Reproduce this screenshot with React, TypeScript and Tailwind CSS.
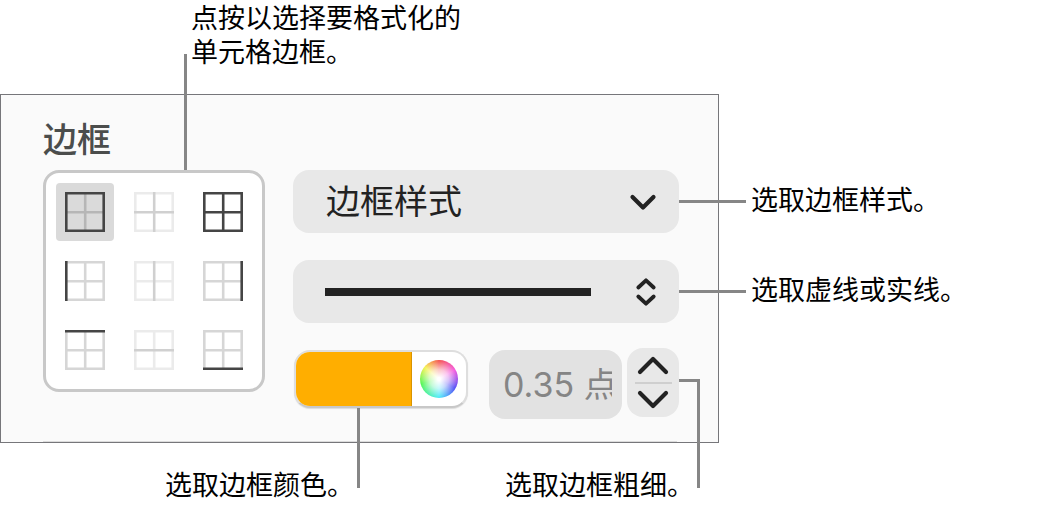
import { useState, type ReactNode } from "react";

type GridColors = {
  id: string;
  label: string;
  top: string;
  right: string;
  bottom: string;
  left: string;
  vertical: string;
  horizontal: string;
};

const DARK = "#454545";
const MID = "#d6d6d6";
const FAINT = "#ebebeb";
const INNER = "#d0d0d0";

const base = { top: MID, right: MID, bottom: MID, left: MID, vertical: MID, horizontal: MID };
const faint = { top: FAINT, right: FAINT, bottom: FAINT, left: FAINT, vertical: FAINT, horizontal: FAINT };

const BORDERS: GridColors[] = [
  { id: "outer", label: "外边框", top: DARK, right: DARK, bottom: DARK, left: DARK, vertical: "#b6b6b6", horizontal: "#b6b6b6" },
  { ...faint, id: "inner", label: "内边框", vertical: INNER, horizontal: INNER },
  { id: "all", label: "所有边框", top: DARK, right: DARK, bottom: DARK, left: DARK, vertical: DARK, horizontal: DARK },
  { ...base, id: "left", label: "左边框", left: DARK },
  { ...faint, id: "vertical", label: "垂直内边框", vertical: INNER },
  { ...base, id: "right", label: "右边框", right: DARK },
  { ...base, id: "top", label: "上边框", top: DARK },
  { ...faint, id: "horizontal", label: "水平内边框", horizontal: INNER },
  { ...base, id: "bottom", label: "下边框", bottom: DARK },
];

function BorderIcon({ c }: { c: GridColors }) {
  const edges = [
    { d: "M20.2 0V40", s: c.vertical },
    { d: "M0 20.2H40", s: c.horizontal },
    { d: "M0 1.3H40", s: c.top },
    { d: "M38.7 0V40", s: c.right },
    { d: "M0 38.7H40", s: c.bottom },
    { d: "M1.3 0V40", s: c.left },
  ];
  const rank = (s: string) => (s === DARK ? 2 : s === INNER ? 1 : 0);
  const ordered = [...edges].sort((a, b) => rank(a.s) - rank(b.s));
  return (
    <svg viewBox="0 0 40 40" className="size-10" fill="none" strokeWidth="2.6" aria-hidden="true">
      {ordered.map((e) => (
        <path key={e.d} d={e.d} stroke={e.s} />
      ))}
    </svg>
  );
}

function Chevron({ d, className }: { d: string; className: string }) {
  return (
    <svg
      viewBox="0 0 32 20"
      className={className}
      fill="none"
      stroke="#222"
      strokeWidth="4.2"
      strokeLinecap="round"
      strokeLinejoin="round"
      aria-hidden="true"
    >
      <path d={d} />
    </svg>
  );
}

function Note({ children }: { children: ReactNode }) {
  return <p className="text-[27px] leading-[34px] whitespace-nowrap text-black">{children}</p>;
}

export default function App() {
  const [selected, setSelected] = useState("outer");
  const [weight, setWeight] = useState("0.35 点");

  const step = (delta: number) =>
    setWeight((w) => `${Math.max(0, (parseFloat(w) || 0) + delta).toFixed(2)} 点`);

  return (
    <main className="bg-white font-['Noto_Sans_CJK_SC',sans-serif]">
      <div className="h-[94px] pl-[191px]">
        <Note>
          点按以选择要格式化的
          <br />
          单元格边框。
        </Note>
      </div>

      <div className="flex">
        <section className="w-full max-w-[719px] border border-[#76767a] bg-[#fafafa] pt-[19px] pl-[42px]">
          <h2 className="text-[34px] leading-[48px] font-medium text-[#4b4d4c]">边框</h2>
          <div className="flex gap-7 pt-2 pr-[39px]">
            <div className="relative shrink-0">
              <div
                role="group"
                aria-label="边框"
                className="grid grid-cols-3 gap-[11px] rounded-2xl border-[3px] border-[#c8c8c8] bg-white p-[10px]"
              >
                {BORDERS.map((b) => (
                  <button
                    key={b.id}
                    type="button"
                    aria-label={b.label}
                    aria-pressed={selected === b.id}
                    onClick={() => setSelected(b.id)}
                    className="flex size-[58px] items-center justify-center rounded aria-pressed:bg-[#dadada]"
                  >
                    <BorderIcon c={b} />
                  </button>
                ))}
              </div>
              <span className="absolute bottom-full left-[141px] h-[116px] w-[3px] bg-[#868686]" />
            </div>

            <div className="min-w-0 flex-1">
              <div className="relative">
                <select
                  aria-label="边框样式"
                  className="block h-[63px] w-full appearance-none rounded-2xl bg-[#e8e8e8] pb-1 pl-[33px] text-[34px] leading-[48px] text-[#222]"
                >
                  <option>边框样式</option>
                </select>
                <span className="pointer-events-none absolute inset-y-0 right-[20px] flex items-center">
                  <Chevron d="M5.5 5 16 15.5 26.5 5" className="h-5 w-8" />
                </span>
                <span className="absolute top-[30px] left-full h-[3px] w-[67px] bg-[#868686]" />
              </div>

              <div className="relative mt-[27px]">
                <select
                  aria-label="线条类型"
                  className="block h-[63px] w-full appearance-none rounded-2xl bg-[#e8e8e8]"
                >
                  <option aria-label="实线" value="solid" />
                  <option aria-label="虚线" value="dashed" />
                </select>
                <span className="pointer-events-none absolute inset-0 flex items-center pr-[22px] pl-8">
                  <span className="h-2 flex-1 bg-[#222]" />
                  <svg
                    viewBox="0 0 22 30"
                    className="ml-11 h-[30px] w-[22px]"
                    fill="none"
                    stroke="#222"
                    strokeWidth="3.8"
                    strokeLinecap="round"
                    strokeLinejoin="round"
                    aria-hidden="true"
                  >
                    <path d="M3.3 10.5 11 3.3 18.7 10.5M3.3 19.5 11 26.7 18.7 19.5" />
                  </svg>
                </span>
                <span className="absolute top-[30px] left-full h-[3px] w-[67px] bg-[#868686]" />
              </div>

              <div className="mt-[25px] flex h-[71px] items-start">
                <div className="relative mt-[2px] ml-px w-[174px] shrink-0">
                  <div className="flex h-[58px] overflow-hidden rounded-2xl border-2 border-[#dedede] border-b-[#c8c8c8] bg-white shadow-[0_1px_1px_rgba(0,0,0,0.12)]">
                    <button type="button" aria-label="边框颜色" className="flex-1 border-r border-[#d99400] bg-[#ffae00]" />
                    <button type="button" aria-label="色轮" className="flex w-[54px] items-center justify-center">
                      <span className="size-[38px] rounded-full bg-[radial-gradient(circle_closest-side,#fff_8%,rgba(255,255,255,0.7)_50%,rgba(255,255,255,0.1)_100%),conic-gradient(#f33a35,#f33fd8_60deg,#3a35f5_120deg,#35e8f8_180deg,#3af53a_255deg,#f5f03a_310deg,#f33a35)]" />
                    </button>
                  </div>
                  <span className="absolute top-full left-[63px] h-20 w-[3px] bg-[#868686]" />
                </div>

                <input
                  aria-label="边框粗细"
                  value={weight}
                  onChange={(e) => setWeight(e.target.value)}
                  className="ml-auto h-[69px] w-[133px] self-end rounded-2xl bg-[#e2e2e2] pr-[10px] pb-[5px] pl-[14px] font-['Inter','Noto_Sans_CJK_SC',sans-serif] text-[34px] text-[#858585]"
                />

                <div className="relative ml-[5px] h-[69px] w-[52px] shrink-0">
                  <div className="flex h-full flex-col items-center rounded-2xl bg-[#e8e8e8]">
                    <button type="button" aria-label="增加" onClick={() => step(0.05)} className="flex flex-1 items-center">
                      <Chevron d="M3 17 16 4 29 17" className="h-5 w-8" />
                    </button>
                    <span className="h-[2px] w-[37px] bg-[#cfcfcf]" />
                    <button type="button" aria-label="减少" onClick={() => step(-0.05)} className="flex flex-1 items-center">
                      <Chevron d="M3 3 16 16 29 3" className="h-5 w-8" />
                    </button>
                  </div>
                  <span className="absolute top-[31px] left-full h-[109px] w-[21px] border-t-[3px] border-r-[3px] border-[#868686]" />
                </div>
              </div>
            </div>
          </div>
          <hr className="mt-[22px] mr-[41px] border-[#dcdcdc]" />
        </section>

        <div className="flex shrink-0 flex-col gap-[56px] pt-[88px] pl-8">
          <Note>选取边框样式。</Note>
          <Note>选取虚线或实线。</Note>
        </div>
      </div>

      <div className="flex gap-[151px] pt-[24px] pl-[165px]">
        <Note>选取边框颜色。</Note>
        <Note>选取边框粗细。</Note>
      </div>
    </main>
  );
}
